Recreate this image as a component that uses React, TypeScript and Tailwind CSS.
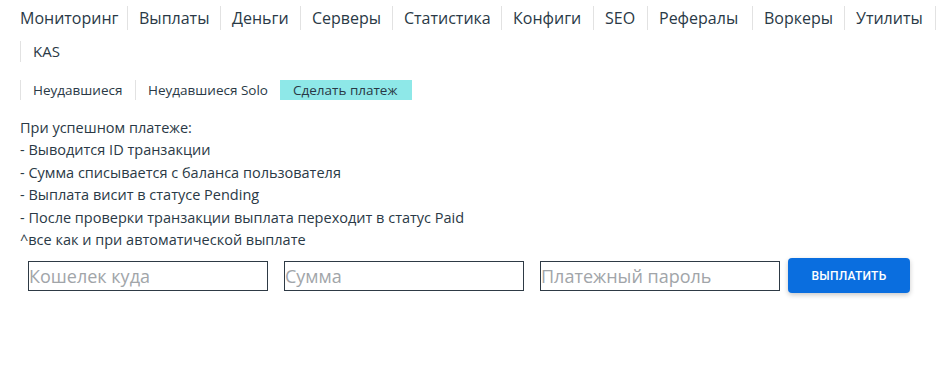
import React from "react";

const mainNav = [
  { label: "Мониторинг", w: "w-[107px]", first: true },
  { label: "Выплаты", w: "w-[93px]" },
  { label: "Деньги", w: "w-[80px]" },
  { label: "Серверы", w: "w-[92px]" },
  { label: "Статистика", w: "w-[109px]" },
  { label: "Конфиги", w: "w-[92px]" },
  { label: "SEO", w: "w-[54px]" },
  { label: "Рефералы", w: "w-[105px]" },
  { label: "Воркеры", w: "w-[92px]" },
  { label: "Утилиты", w: "w-[91px]" },
];

const subTabs = [
  { label: "Неудавшиеся", w: "w-[115px]" },
  { label: "Неудавшиеся Solo", w: "w-[145px]" },
  { label: "Сделать платеж", w: "w-[132px]", active: true },
];

const notes = [
  "При успешном платеже:",
  "- Выводится ID транзакции",
  "- Сумма списывается с баланса пользователя",
  "- Выплата висит в статусе Pending",
  "- После проверки транзакции выплата переходит в статус Paid",
  "^все как и при автоматической выплате",
];

export default function App() {
  return (
    <div className="min-h-[392px] w-full bg-white px-5 pt-[6px] font-['Open_Sans',sans-serif] text-[#2a3946]">
      {/* main nav */}
      <nav className="flex h-6 items-center text-[16px]">
        {mainNav.map((item) => (
          <a
            key={item.label}
            href="#"
            className={`flex h-6 shrink-0 items-center whitespace-nowrap ${item.w} ${
              item.first ? "" : "border-l border-[#e2e2e2] pl-[11px]"
            }`}
          >
            {item.label}
          </a>
        ))}
        <span className="h-6 border-l border-[#e2e2e2]" />
      </nav>
      <nav className="mt-[11px] flex">
        <a
          href="#"
          className="flex h-[21px] items-center border-l border-[#e2e2e2] pl-3 pr-3 text-[15px]"
        >
          KAS
        </a>
      </nav>

      {/* sub tabs */}
      <div className="mt-[18px] flex text-[13.5px]">
        {subTabs.map((tab) => (
          <a
            key={tab.label}
            href="#"
            className={`flex h-5 shrink-0 items-center whitespace-nowrap border-l pl-3 ${tab.w} ${
              tab.active
                ? "border-[#8ee8e8] bg-[#8ee8e8]"
                : "border-[#e2e2e2]"
            }`}
          >
            {tab.label}
          </a>
        ))}
      </div>

      {/* description */}
      <div className="mt-[17px] text-[14.5px] leading-[22.4px]">
        {notes.map((line) => (
          <p key={line}>{line}</p>
        ))}
      </div>

      {/* payment form */}
      <form
        className="mt-[7px] flex items-center gap-4 pl-2"
        onSubmit={(e) => e.preventDefault()}
      >
        <input
          placeholder="Кошелек куда"
          className="h-[30px] w-[240px] border border-[#2e3a45] px-0 text-[18px] text-[#2a3946] outline-none placeholder:text-[#a1a5a9]"
        />
        <input
          placeholder="Сумма"
          className="h-[30px] w-[240px] border border-[#2e3a45] px-0 text-[18px] text-[#2a3946] outline-none placeholder:text-[#a1a5a9]"
        />
        <input
          type="password"
          placeholder="Платежный пароль"
          className="h-[30px] w-[240px] border border-[#2e3a45] px-0 text-[18px] text-[#2a3946] outline-none placeholder:text-[#a1a5a9]"
        />
        <button
          type="submit"
          className="-ml-2 h-[35px] w-[122px] rounded-[4px] bg-[#0a6edf] font-['Roboto',sans-serif] text-[12px] font-medium uppercase tracking-[0.02em] text-white shadow-[0_2px_5px_rgba(0,0,0,0.22)]"
        >
          Выплатить
        </button>
      </form>
    </div>
  );
}
